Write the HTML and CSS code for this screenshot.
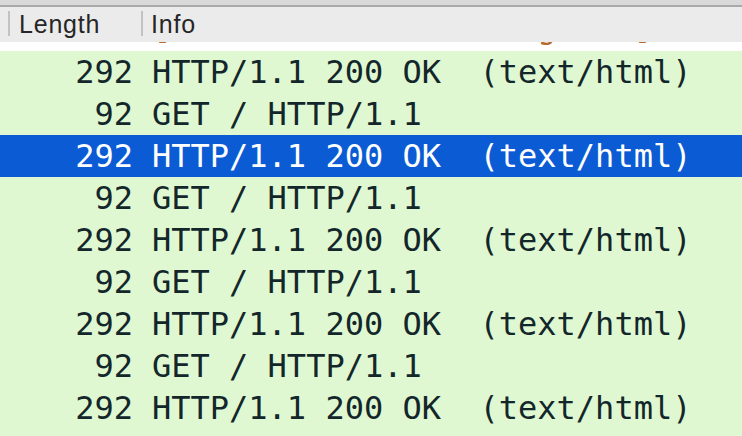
FILE: index.html
```html
<!DOCTYPE html>
<html>
<head>
<meta charset="utf-8">
<link rel="stylesheet" href="styles.css">
</head>
<body>
<div class="pane">
  <div class="topbar"></div>
  <div class="header">
    <div class="hcell hlen"><span class="sep"></span><span class="htext">Length</span></div>
    <div class="hcell hinfo"><span class="sep"></span><span class="htext">Info</span></div>
  </div>
  <div class="list">
    <div class="row partial"><span class="len"> </span><span class="info">[TCP ACKed unseen segment] 80 → 5</span></div>
    <div class="row http"><span class="len">292</span><span class="info">HTTP/1.1 200 OK  (text/html)</span></div>
    <div class="row http"><span class="len">92</span><span class="info">GET / HTTP/1.1</span></div>
    <div class="row selected"><span class="len">292</span><span class="info">HTTP/1.1 200 OK  (text/html)</span></div>
    <div class="row http"><span class="len">92</span><span class="info">GET / HTTP/1.1</span></div>
    <div class="row http"><span class="len">292</span><span class="info">HTTP/1.1 200 OK  (text/html)</span></div>
    <div class="row http"><span class="len">92</span><span class="info">GET / HTTP/1.1</span></div>
    <div class="row http"><span class="len">292</span><span class="info">HTTP/1.1 200 OK  (text/html)</span></div>
    <div class="row http"><span class="len">92</span><span class="info">GET / HTTP/1.1</span></div>
    <div class="row http"><span class="len">292</span><span class="info">HTTP/1.1 200 OK  (text/html)</span></div>
    <div class="row http"><span class="len">92</span><span class="info">GET / HTTP/1.1</span></div>
  </div>
</div>
</body>
</html>
```
FILE: styles.css
```css
html, body {
  margin: 0;
  padding: 0;
}
body {
  width: 742px;
  height: 436px;
  overflow: hidden;
  background: #e0f8d1;
}
.pane {
  display: flex;
  flex-direction: column;
  height: 436px;
}
.topbar {
  height: 5px;
  background: #d9d9d9;
  border-bottom: 2px solid #a9a9a9;
  flex: none;
}
.header {
  display: flex;
  height: 35px;
  background: #ebebeb;
  flex: none;
  font-family: "Liberation Sans", Arial, sans-serif;
  font-size: 25px;
  letter-spacing: 0.8px;
  color: #262626;
}
.hcell {
  display: flex;
  align-items: center;
}
.hlen {
  width: 133px;
  padding-left: 8px;
}
.hinfo {
  flex: 1;
}
.sep {
  width: 2px;
  height: 25px;
  background: #c2c2c2;
  margin-top: -2px;
}
.hlen .htext {
  padding-left: 9px;
}
.hinfo .htext {
  padding-left: 8px;
}
.list {
  flex: 1;
  overflow: hidden;
  background: #e0f8d1;
}
.row {
  display: flex;
  height: 42px;
  line-height: 42px;
  font-family: "DejaVu Sans Mono", monospace;
  font-size: 32px;
  color: #13272b;
  white-space: pre;
}
.len {
  width: 133px;
  padding-right: 8px;
  text-align: right;
  flex: none;
}
.info {
  padding-left: 11px;
}
.row.partial {
  margin-top: -33px;
  background: #ffffff;
  color: #b5692b;
  line-height: 37px;
}
.row.selected {
  background: #0b5bd4;
  color: #ffffff;
}
```
